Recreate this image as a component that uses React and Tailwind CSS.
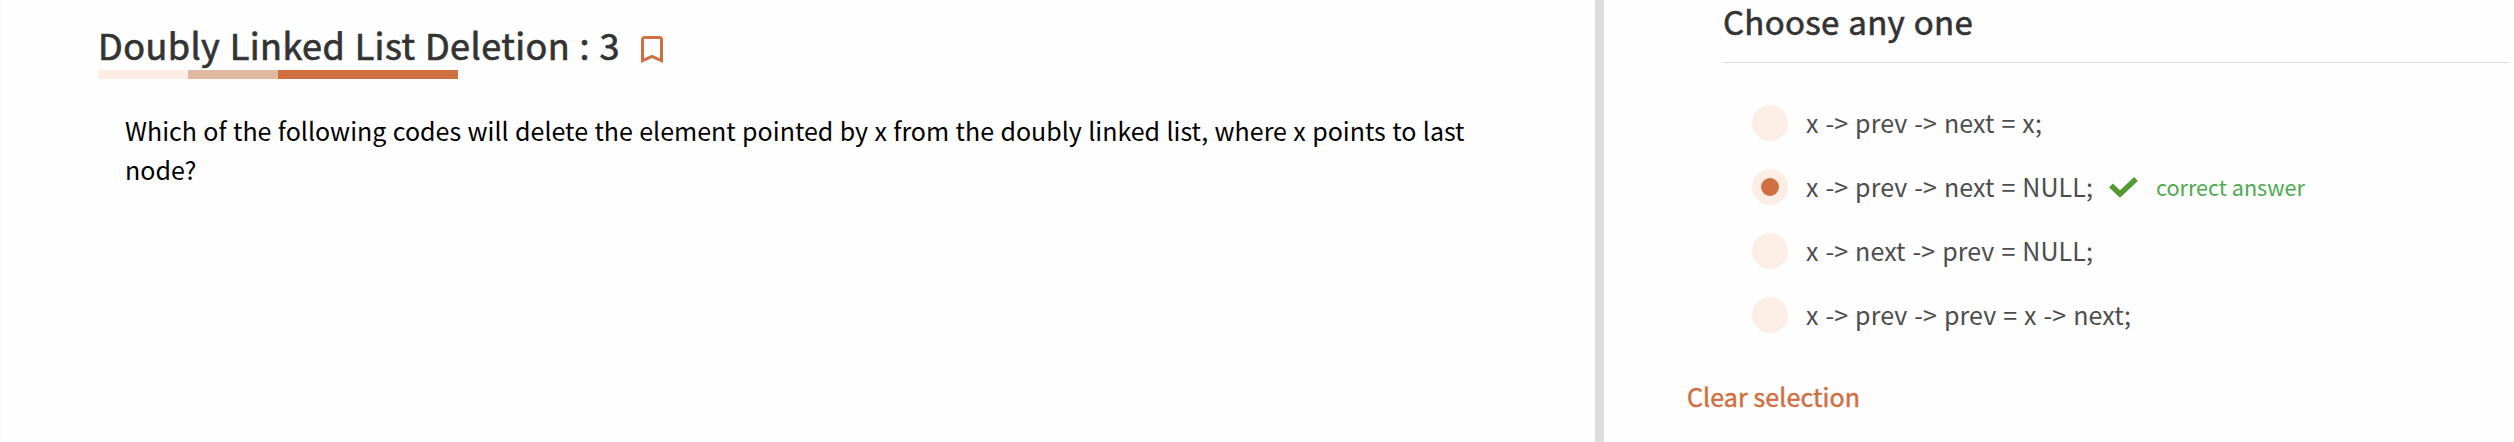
const options = [
  { text: "x -> prev -> next = x;" },
  { text: "x -> prev -> next = NULL;", selected: true },
  { text: "x -> next -> prev = NULL;" },
  { text: "x -> prev -> prev = x -> next;" },
];

function Bookmark() {
  return (
    <svg className="mt-9 ml-6 h-[27px] w-[22px] shrink-0" viewBox="0 0 22 27" fill="none" stroke="#cf6f42" strokeWidth="3">
      <path d="M1.5 24.7V3.5a2 2 0 0 1 2-2h15a2 2 0 0 1 2 2v21.2L11 20.5z" />
    </svg>
  );
}

function Option({ text, selected }) {
  return (
    <li className="flex h-9 items-center">
      <span className="flex size-9 shrink-0 items-center justify-center rounded-full bg-[#fceee5]">
        {selected && <span className="size-[18px] rounded-full bg-[#cf6f42]" />}
      </span>
      <span className="ml-[18px] pb-[3px] text-[25px] leading-9 tracking-[0.1px] whitespace-nowrap text-[#4d4d4d] [word-spacing:1.2px]">{text}</span>
      {selected && (
        <>
          <svg className="ml-4 h-[21px] w-[29px]" viewBox="0 0 29 21" fill="none" stroke="#559a30" strokeWidth="5.4">
            <path d="M2 8.5l9 8.5L27 2" />
          </svg>
          <span className="ml-[18px] text-[21.6px] leading-9 whitespace-nowrap text-[#4caa50]">correct answer</span>
        </>
      )}
    </li>
  );
}

export default function App() {
  return (
    <div className="flex h-[442px] overflow-hidden bg-[#fefefe] font-['Noto_Sans_CJK_SC',sans-serif]">
      <main className="w-[1595px] shrink-0 border-l border-[#f8f8f8] pl-[97px]">
        <div className="flex h-[70px] items-start">
          <h1 className="mt-[19px] w-[519px] text-[36px] leading-[50px] font-normal tracking-[0.43px] whitespace-nowrap text-[#333] [-webkit-text-stroke:0.7px_#333] [word-spacing:1px]">Doubly Linked List Deletion : 3</h1>
          <Bookmark />
        </div>
        <div className="flex h-[9px]">
          <span className="w-[90px] bg-[#fceee5]" />
          <span className="w-[90px] bg-[#e1b9a1]" />
          <span className="w-[180px] bg-[#cf6f42]" />
        </div>
        <p className="mt-8 ml-[27px] text-[25px] leading-[39px] whitespace-nowrap text-black [word-spacing:0.8px]">
          Which of the following codes will delete the element pointed by x from the doubly linked list, where x points to last
          <br />
          node?
        </p>
      </main>
      <div className="w-[9px] shrink-0 bg-[#ddd]" />
      <section className="flex-1 pl-[83px]">
        <div className="mr-[5px] ml-9 h-[63px] border-b border-[#ddd]">
          <h2 className="text-[33px] leading-[43px] font-normal tracking-[0.3px] whitespace-nowrap text-[#333] [-webkit-text-stroke:0.6px_#333] [word-spacing:1px]">Choose any one</h2>
        </div>
        <ul className="mt-[42px] ml-[65px] flex flex-col gap-7">
          {options.map((o) => (
            <Option key={o.text} text={o.text} selected={o.selected} />
          ))}
        </ul>
        <button className="mt-[45px] block text-[25px] leading-9 font-normal tracking-[0.1px] whitespace-nowrap text-[#cf6f42] [-webkit-text-stroke:0.5px_#cf6f42]">Clear selection</button>
      </section>
    </div>
  );
}
